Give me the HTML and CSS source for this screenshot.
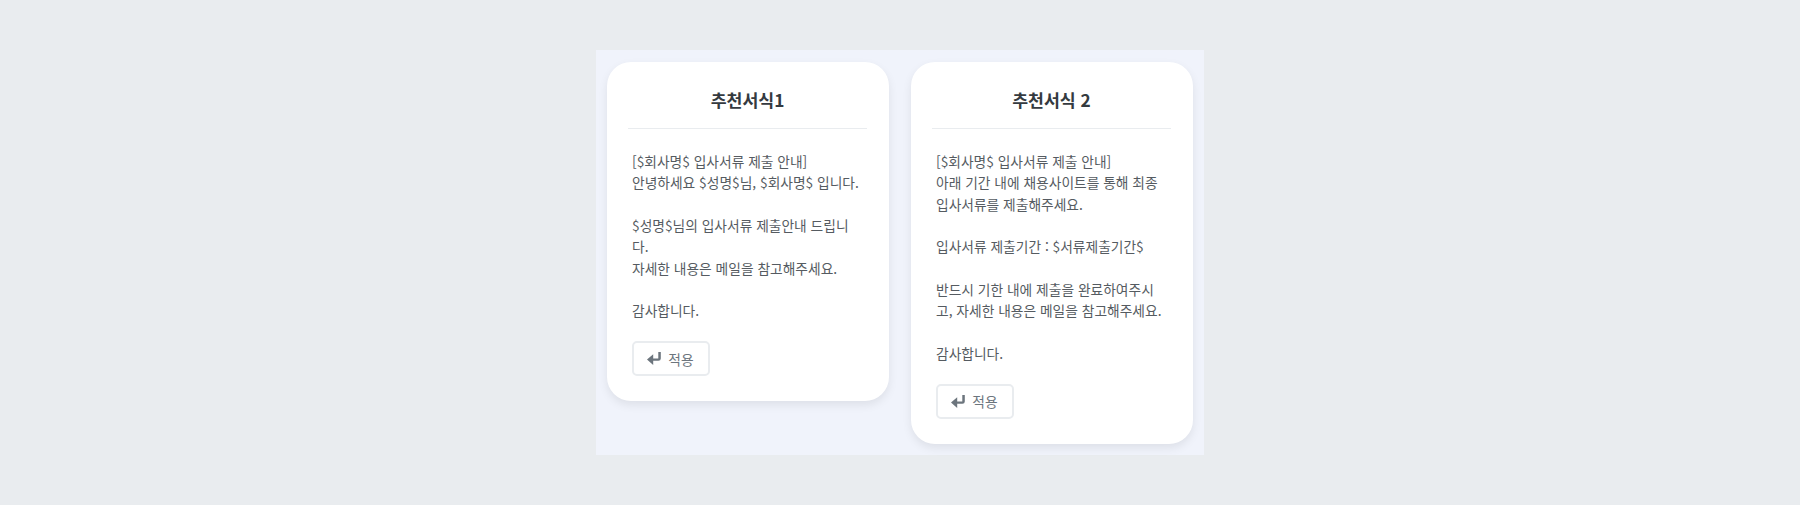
FILE: index.html
```html
<!DOCTYPE html>
<html lang="ko">
<head>
    <meta charset="UTF-8">
    <meta name="viewport" content="width=device-width, initial-scale=1.0">
    <title>추천서식</title>
    <link rel="stylesheet" href="styles.css">
</head>
<body>
    <div class="panel">
        <div class="card">
            <h3 class="card-title">추천서식1</h3>
            <p class="card-text">[$회사명$ 입사서류 제출 안내]
안녕하세요 $성명$님, $회사명$ 입니다.

$성명$님의 입사서류 제출안내 드립니다.
자세한 내용은 메일을 참고해주세요.

감사합니다.</p>
            <button class="apply-btn">
                <svg class="apply-icon" viewBox="0 0 14 13"><path d="M11.3 0h2.5v6.4q0 2.4-2.4 2.4H6.2V13L0 7.6l6.2-5.4v4.2h5.1z"/></svg>
                적용
            </button>
        </div>
        <div class="card">
            <h3 class="card-title">추천서식 2</h3>
            <p class="card-text">[$회사명$ 입사서류 제출 안내]
아래 기간 내에 채용사이트를 통해 최종 입사서류를 제출해주세요.

입사서류 제출기간 : $서류제출기간$

반드시 기한 내에 제출을 완료하여주시고, 자세한 내용은 메일을 참고해주세요.

감사합니다.</p>
            <button class="apply-btn">
                <svg class="apply-icon" viewBox="0 0 14 13"><path d="M11.3 0h2.5v6.4q0 2.4-2.4 2.4H6.2V13L0 7.6l6.2-5.4v4.2h5.1z"/></svg>
                적용
            </button>
        </div>
    </div>
</body>
</html>
```

FILE: styles.css
```css
* {
    box-sizing: border-box;
}
body {
    font-family: "Noto Sans CJK KR", "Noto Sans", sans-serif;
    display: flex;
    justify-content: center;
    align-items: flex-start;
    margin: 0;
    padding: 50px 0;
    background-color: #e9ecef;
}
.panel {
    display: flex;
    align-items: flex-start;
    gap: 22px;
    width: 608px;
    padding: 12px 11px 11px;
    background: #f0f3fb;
}
.card {
    width: 282px;
    padding: 22px 22px 25px 21px;
    background: #fff;
    border-radius: 24px;
    box-shadow: 0 4px 10px rgba(0, 0, 0, 0.08);
}
.card-title {
    margin: 0 0 22px;
    height: 45px;
    line-height: 32px;
    font-size: 17.28px;
    font-weight: 700;
    text-align: center;
    color: #343a40;
    border-bottom: 1px solid #e9ecef;
}
.card-text {
    margin: 0 0 19.5px;
    padding: 0 5px 0 4px;
    font-size: 13.76px;
    line-height: 1.55;
    color: #555b61;
    white-space: pre-wrap;
    word-break: break-all;
}
.apply-btn {
    display: flex;
    align-items: center;
    justify-content: center;
    gap: 7px;
    width: 78px;
    height: 35px;
    margin-left: 4px;
    padding: 0 1px 0 0;
    font-family: inherit;
    font-size: 13.76px;
    color: #6c757d;
    background: #fff;
    border: 2px solid #e9ecef;
    border-radius: 5px;
}
.apply-icon {
    width: 14px;
    height: 13px;
    fill: #6c757d;
}
```
